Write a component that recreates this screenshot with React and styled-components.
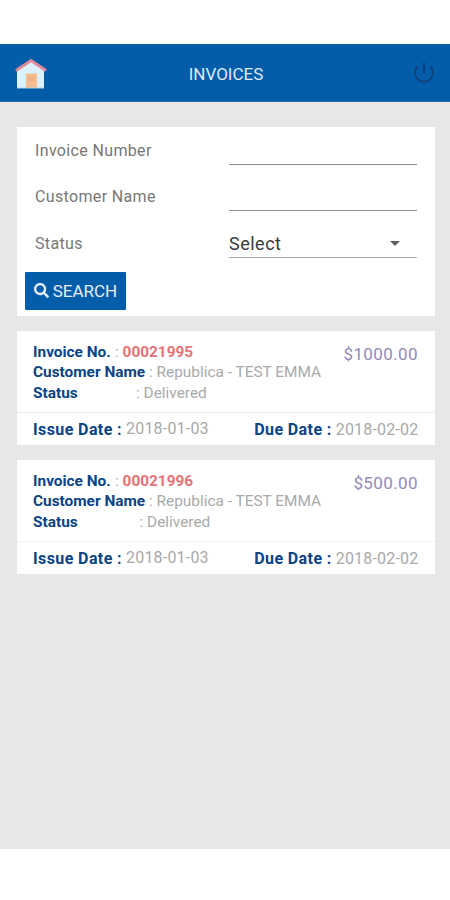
import React from 'react';
import styled, { createGlobalStyle } from 'styled-components';
import { FaSearch } from 'react-icons/fa';

const GlobalStyle = createGlobalStyle`
  * {
    box-sizing: border-box;
  }
  body {
    margin: 0;
    background-color: #ffffff;
    font-family: Roboto, 'Liberation Sans', sans-serif;
  }
`;

const Screen = styled.div`
  width: 450px;
  height: 900px;
  padding: 44px 0 51px;
  display: flex;
  flex-direction: column;
  background-color: #ffffff;
  overflow: hidden;
`;

const Header = styled.header`
  flex: none;
  height: 58px;
  padding: 0 15px 0 14px;
  display: grid;
  grid-template-columns: 34px 1fr 22px;
  align-items: center;
  background-color: #045da8;
  border-bottom: 1px solid #2f6fae;

  svg {
    display: block;
  }
`;

const Title = styled.h1`
  margin: 3px 0 0;
  padding-right: 9px;
  text-align: center;
  font-size: 17px;
  line-height: 20px;
  font-weight: 400;
  color: #dcebf8;
`;

const Content = styled.main`
  flex: 1;
  padding: 25px 15.5px 0 16.5px;
  background-color: #e7e7e7;
`;

const SearchPanel = styled.section`
  height: 188.5px;
  padding: 0 17.5px 0 18.5px;
  background-color: #ffffff;
`;

const Field = styled.div`
  display: grid;
  grid-template-columns: 194px 1fr;
  height: 46px;

  & + & {
    height: 46.5px;
  }
`;

const Label = styled.label`
  padding-top: 14px;
  font-size: 16px;
  line-height: 20px;
  letter-spacing: 0.35px;
  color: #777777;
`;

const Input = styled.input`
  width: 100%;
  height: 38px;
  padding: 0;
  border: none;
  border-bottom: 1px solid #8e8e8e;
  outline: none;
  background: transparent;
`;

const Select = styled.div`
  height: 38px;
  padding: 10px 17px 0 0;
  display: flex;
  align-items: center;
  justify-content: space-between;
  border-bottom: 1px solid #a8a8a8;
  font-size: 18px;
  letter-spacing: 0.5px;
  color: #3a3a3a;
`;

const Caret = styled.span`
  border: 5.5px solid transparent;
  border-top-color: #606060;
  border-bottom: none;
`;

const SearchButton = styled.button`
  width: 101px;
  height: 37.5px;
  margin: 6px 0 0 -10px;
  padding: 0;
  display: flex;
  align-items: center;
  justify-content: center;
  gap: 4px;
  border: none;
  border-radius: 1px;
  background-color: #045da8;
  color: #e4f0fa;
  font-family: inherit;
  font-size: 17px;
`;

const StyledInvoice = styled.article`
  height: 113.5px;
  margin-top: 15.5px;
  background-color: #ffffff;

  .details {
    display: flex;
    justify-content: space-between;
    height: 82px;
    padding: 11px 16.5px 0;
    border-bottom: 1px solid #e8e8e8;
  }
  & + & .details {
    border-bottom-color: #f1f1f1;
  }
  .dates {
    display: flex;
    justify-content: space-between;
    padding: 7px 16px 0 16.5px;
  }
`;

const Line = styled.div`
  display: flex;
  height: 20.3px;
  font-size: 15.4px;
  line-height: 20px;
  white-space: pre;
`;

const Name = styled.span`
  width: ${(props) => props.$width || 'auto'};
  font-weight: 700;
  letter-spacing: ${(props) => props.$spacing || '0'};
  color: #0b4384;
`;

const Value = styled.span`
  color: #a9a9a9;
  letter-spacing: ${(props) => props.$spacing || '0'};
`;

const Number = styled.span`
  font-weight: 700;
  color: #e57378;
`;

const Amount = styled.div`
  padding-top: 2px;
  font-size: 17px;
  line-height: 20px;
  letter-spacing: 0.4px;
  color: #938bb8;
`;

const DateItem = styled.div`
  display: flex;
  gap: 4px;
  font-size: 16px;
  line-height: 20px;

  ${Value} {
    margin-top: ${(props) => props.$raise || '0'};
  }
`;

const HomeIcon = () => (
  <svg width="34" height="34" viewBox="0 0 34 34">
    <path d="M3 13 17 4l13 9v19H3z" fill="#dcf1fa" />
    <path d="M12 17.5h11V32H12z" fill="#f5bd91" />
    <path d="M14 20h6v5h-6z" fill="#f0b184" />
    <path d="M2 14.5 17 4.5l15 10" fill="none" stroke="#dc8b9d" strokeWidth="3" />
    <path d="M3 32h27" stroke="#b8d2e4" strokeWidth="1" />
  </svg>
);

const PowerIcon = () => (
  <svg width="22" height="22" viewBox="0 0 22 22" fill="none" stroke="#0b4383" strokeWidth="2.2">
    <path d="M4.8 4.2a9 9 0 1 0 12.4 0" />
    <path d="M11 0.5v10.5" />
  </svg>
);

const invoices = [
  { number: '00021995', amount: '$1000.00', statusOffset: '103px' },
  { number: '00021996', amount: '$500.00', statusOffset: '106.5px' },
];

const Invoice = ({ number, amount, statusOffset }) => {
  return (
    <StyledInvoice>
      <div className={'details'}>
        <div>
          <Line>
            <Name $width="82px">Invoice No.</Name>
            <Value>: </Value>
            <Number>{number}</Number>
          </Line>
          <Line>
            <Name $width="116px">Customer Name</Name>
            <Value>: Republica - TEST EMMA</Value>
          </Line>
          <Line>
            <Name $width={statusOffset}>Status</Name>
            <Value>: Delivered</Value>
          </Line>
        </div>
        <Amount>{amount}</Amount>
      </div>
      <div className={'dates'}>
        <DateItem $raise="-1.5px">
          <Name $spacing="0.4px">Issue Date :</Name>
          <Value $spacing="0.2px">2018-01-03</Value>
        </DateItem>
        <DateItem>
          <Name $spacing="0.4px">Due Date :</Name>
          <Value $spacing="0.2px">2018-02-02</Value>
        </DateItem>
      </div>
    </StyledInvoice>
  );
};

const App = () => {
  return (
    <Screen>
      <GlobalStyle />
      <Header>
        <HomeIcon />
        <Title>INVOICES</Title>
        <PowerIcon />
      </Header>
      <Content>
        <SearchPanel>
          <Field>
            <Label htmlFor="invoiceNumber">Invoice Number</Label>
            <Input id="invoiceNumber" />
          </Field>
          <Field>
            <Label htmlFor="customerName">Customer Name</Label>
            <Input id="customerName" />
          </Field>
          <Field>
            <Label>Status</Label>
            <Select>
              Select
              <Caret />
            </Select>
          </Field>
          <SearchButton>
            <FaSearch size={15} />
            SEARCH
          </SearchButton>
        </SearchPanel>
        {invoices.map((invoice) => (
          <Invoice key={invoice.number} {...invoice} />
        ))}
      </Content>
    </Screen>
  );
};

export default App;
